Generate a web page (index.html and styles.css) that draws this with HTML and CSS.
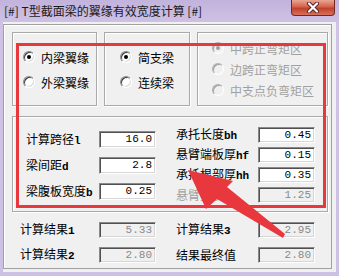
FILE: index.html
```html
<!DOCTYPE html>
<html lang="zh-CN">

<head>
    <meta charset="UTF-8">
    <title>T型截面梁的翼缘有效宽度计算</title>
    <link rel="stylesheet" href="styles.css">
</head>

<body>
    <div class="window">
        <div class="titlebar">
            <span class="title">[#] T型截面梁的翼缘有效宽度计算 [#]</span>
            <div class="close">
                <svg width="16" height="11" viewBox="0 0 16 11">
                    <path d="M4 1.5 L12 9.5 M12 1.5 L4 9.5" stroke="#5a2020" stroke-width="4" stroke-linecap="round"/>
                    <path d="M4 1.5 L12 9.5 M12 1.5 L4 9.5" stroke="#fff" stroke-width="2.2" stroke-linecap="round"/>
                </svg>
            </div>
        </div>

        <div class="client">
            <div class="frame">
                <div class="options">
                    <div class="group g-flange">
                        <div class="radio"><span class="knob checked"></span>内梁翼缘</div>
                        <div class="radio"><span class="knob"></span>外梁翼缘</div>
                    </div>
                    <div class="group g-support">
                        <div class="radio"><span class="knob checked"></span>简支梁</div>
                        <div class="radio"><span class="knob"></span>连续梁</div>
                    </div>
                    <div class="group g-zone disabled">
                        <div class="radio"><span class="knob checked"></span>中跨正弯矩区</div>
                        <div class="radio"><span class="knob"></span>边跨正弯矩区</div>
                        <div class="radio"><span class="knob"></span>中支点负弯矩区</div>
                    </div>
                </div>

                <div class="group params">
                    <div class="col col-left">
                        <div class="field"><span class="lbl">计算跨径<b>l</b></span><span class="edit">16.0</span></div>
                        <div class="field"><span class="lbl">梁间距<b>d</b></span><span class="edit">2.8</span></div>
                        <div class="field"><span class="lbl">梁腹板宽度<b>b</b></span><span class="edit">0.25</span></div>
                    </div>
                    <div class="col col-right">
                        <div class="field"><span class="lbl">承托长度<b>bh</b></span><span class="edit">0.45</span></div>
                        <div class="field"><span class="lbl">悬臂端板厚<b>hf</b></span><span class="edit">0.15</span></div>
                        <div class="field"><span class="lbl">承托根部厚<b>hh</b></span><span class="edit">0.35</span></div>
                        <div class="field off"><span class="lbl">悬臂宽度</span><span class="edit">1.25</span></div>
                    </div>
                </div>

                <div class="results">
                    <span class="lbl">计算结果<b>1</b></span><span class="edit ro">5.33</span>
                    <span></span>
                    <span class="lbl">计算结果<b>3</b></span><span class="edit ro">2.95</span>
                    <span class="lbl">计算结果<b>2</b></span><span class="edit ro">2.80</span>
                    <span></span>
                    <span class="lbl">结果最终值</span><span class="edit ro">2.80</span>
                </div>
            </div>
        </div>

        <!-- annotation drawn over the dialog -->
        <div class="mark"></div>
        <svg class="arrow" width="339" height="276" viewBox="0 0 339 276">
            <polygon points="188,170 233,181 227,187 285,234 283,238 217,199 206,209" fill="#e8383d"/>
        </svg>
    </div>
</body>

</html>
```

FILE: styles.css
```css
body {
    margin: 0;
    font-family: "Noto Sans CJK SC", "Liberation Sans", sans-serif;
    font-size: 12px;
    color: #000;
}

.window {
    position: relative;
    width: 339px;
    height: 276px;
    display: flex;
    flex-direction: column;
    background: linear-gradient(#c2b3dc, #cfc2e6 24px, #cdc0e5);
    overflow: hidden;
}

.titlebar {
    height: 22px;
    display: flex;
    align-items: flex-start;
    padding-left: 4px;
}

.title {
    line-height: 22px;
    color: #1a1a1a;
}

.close {
    margin-left: auto;
    margin-right: 4px;
    width: 44px;
    height: 16px;
    display: flex;
    align-items: center;
    justify-content: center;
    box-sizing: border-box;
    border: 1px solid #6e2a22;
    border-top: none;
    border-radius: 0 0 4px 4px;
    background: linear-gradient(#eaa594, #d4634c 45%, #c0402c 55%, #d9705a);
}

.client {
    flex: 1;
    margin: 0 3px 4px 3px;
    padding: 2px 4px 3px 0;
    background: #f0f0f0;
    display: flex;
}

.frame {
    flex: 1;
    border: 1px solid #a0a0a0;
    box-shadow: inset 1px 1px 0 #fff;
    padding: 7px 3px 0 8px;
}

.group {
    box-sizing: border-box;
    border: 1px solid #a9a9a9;
    box-shadow: inset 1px 1px 0 #fff, 1px 1px 0 #fff;
}

.options {
    display: flex;
    gap: 7px;
}

.options .group {
    height: 74px;
    display: flex;
    flex-direction: column;
}

.g-flange {
    width: 85px;
    padding: 17px 0 0 10px;
    gap: 11px;
}

.g-support {
    width: 86px;
    padding: 17px 0 0 15px;
    gap: 11px;
}

.g-zone {
    width: 131px;
    padding: 8px 0 0 14px;
    gap: 7px;
}

.radio {
    height: 14px;
    display: flex;
    align-items: center;
    gap: 6px;
    white-space: nowrap;
}

.knob {
    position: relative;
    width: 12px;
    height: 12px;
    box-sizing: border-box;
    border-radius: 50%;
    border: 1px solid;
    border-color: #8a8a8a #fff #fff #8a8a8a;
    box-shadow: inset 1px 1px 0 #404040, inset -1px -1px 0 #d8d8d8;
    background: #fff;
}

.knob.checked::after {
    content: "";
    position: absolute;
    left: 3px;
    top: 3px;
    width: 4px;
    height: 4px;
    border-radius: 50%;
    background: #000;
}

.disabled .radio {
    color: #a0a0a0;
}

.disabled .knob {
    background: #f0f0f0;
    border-color: #b0b0b0 #fff #fff #b0b0b0;
    box-shadow: inset 1px 1px 0 #a0a0a0;
}

.disabled .knob.checked::after {
    background: #a0a0a0;
}

.params {
    margin-top: 10px;
    width: 316px;
    height: 96px;
    display: flex;
}

.col {
    display: flex;
    flex-direction: column;
}

.col-left {
    padding: 14px 0 0 13px;
    gap: 9px;
}

.col-left .lbl {
    width: 73px;
}

.col-left .edit {
    height: 17px;
}

.col-right {
    margin-left: 20px;
    padding-top: 10px;
    gap: 4px;
}

.col-right .lbl {
    width: 82px;
}

.field {
    display: flex;
    align-items: center;
}

.lbl {
    white-space: nowrap;
    line-height: 14px;
}

.lbl b {
    font-family: "Liberation Mono", monospace;
    font-size: 11px;
}

.edit {
    width: 57px;
    height: 16px;
    box-sizing: border-box;
    border: 1px solid;
    border-color: #8a8a8a #fff #fff #8a8a8a;
    box-shadow: inset 1px 1px 0 #505050, inset -1px -1px 0 #d6d6d6;
    background: #fff;
    font-family: "Liberation Mono", monospace;
    font-size: 11px;
    line-height: 14px;
    text-align: right;
    padding-right: 3px;
}

.off .lbl {
    color: #a0a0a0;
}

.off .edit,
.edit.ro {
    background: #f0f0f0;
    color: #8a8a8a;
}

.results {
    margin-top: 10px;
    padding-left: 8px;
    display: grid;
    grid-template-columns: 79px 57px 20px 82px 57px;
    grid-auto-rows: 16px;
    row-gap: 9px;
    align-items: center;
}

.mark {
    position: absolute;
    left: 16px;
    top: 43px;
    width: 310px;
    height: 165px;
    box-sizing: border-box;
    border: 3px solid #e8383d;
}

.arrow {
    position: absolute;
    left: 0;
    top: 0;
}
```
